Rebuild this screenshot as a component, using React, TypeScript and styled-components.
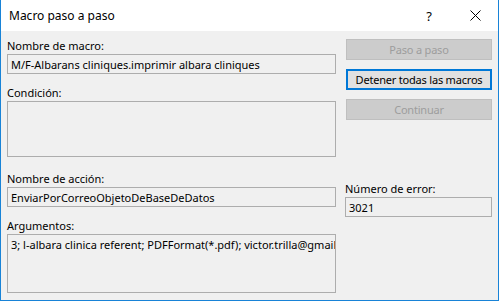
import React from 'react';
import styled, {createGlobalStyle} from 'styled-components';

const GlobalStyle = createGlobalStyle`
  html, body {
    margin: 0;
    padding: 0;
    background: #ffffff;
  }
  body {
    font-family: "Noto Sans", "Open Sans", Arial, sans-serif;
    font-size: 11px;
    color: #000000;
  }
`;

const Window = styled.div`
  width: 499px;
  height: 301px;
  box-sizing: border-box;
  border: 1px solid #1883d7;
  border-top: none;
  background: #f0f0f0;
  display: flex;
  flex-direction: column;
  overflow: hidden;
`;

const TitleBar = styled.div`
  height: 31px;
  background: #ffffff;
  display: flex;
  align-items: center;
  padding-left: 8px;
  box-sizing: border-box;
`;

const Title = styled.div`
  flex: 1;
  font-size: 12px;
  padding-bottom: 1px;
`;

const TitleButton = styled.div<{w: number}>`
  width: ${p => p.w}px;
  height: 31px;
  display: flex;
  align-items: center;
  justify-content: center;
  font-size: 13px;
`;

const Body = styled.div`
  flex: 1;
  display: grid;
  grid-template-columns: 329px 147px;
  column-gap: 9px;
  padding: 0 6px 0 6px;
`;

const Column = styled.div<{top: number}>`
  display: flex;
  flex-direction: column;
  padding-top: ${p => p.top}px;
`;

const Label = styled.div<{gap: number}>`
  margin-top: ${p => p.gap}px;
  height: 17px;
  line-height: 17px;
  font-size: 11px;
  white-space: nowrap;
`;

const Box = styled.div<{h: number}>`
  height: ${p => p.h}px;
  box-sizing: border-box;
  border: 1px solid #adadad;
  background: #f0f0f0;
  padding: 1px 3px 0 3px;
  line-height: 17px;
  white-space: nowrap;
  overflow: hidden;
`;

const Button = styled.div<{disabled?: boolean; focused?: boolean; gap: number}>`
  margin-top: ${p => p.gap}px;
  margin-left: 1px;
  height: 21px;
  box-sizing: border-box;
  display: flex;
  align-items: center;
  justify-content: center;
  background: ${p => (p.disabled ? '#cccccc' : '#e1e1e1')};
  border: ${p => (p.focused ? '2px solid #0078d7' : '1px solid #bfbfbf')};
  color: ${p => (p.disabled ? '#9d9d9d' : '#000000')};
  font-size: 11px;
  letter-spacing: -0.2px;
  white-space: nowrap;
`;

function CloseIcon() {
  return (
    <svg width="11" height="11" viewBox="0 0 11 11">
      <path d="M0.5 0.5 L10.5 10.5 M10.5 0.5 L0.5 10.5" stroke="#000" strokeWidth="1" fill="none"/>
    </svg>
  );
}

function App() {
  return (
    <>
      <GlobalStyle/>
      <Window>
        <TitleBar>
          <Title>Macro paso a paso</Title>
          <TitleButton w={46}>?</TitleButton>
          <TitleButton w={46}><CloseIcon/></TitleButton>
        </TitleBar>
        <Body>
          <Column top={6}>
            <Label gap={0}>Nombre de macro:</Label>
            <Box h={20}>M/F-Albarans cliniques.imprimir albara cliniques</Box>
            <Label gap={10}>Condición:</Label>
            <Box h={56}></Box>
            <Label gap={13}>Nombre de acción:</Label>
            <Box h={20}>EnviarPorCorreoObjetoDeBaseDeDatos</Box>
            <Label gap={10}>Argumentos:</Label>
            <Box h={59}>3; l-albara clinica referent; PDFFormat(*.pdf); victor.trilla@gmail</Box>
          </Column>
          <Column top={8}>
            <Button disabled gap={0}>Paso a paso</Button>
            <Button focused gap={9}>Detener todas las macros</Button>
            <Button disabled gap={9}>Continuar</Button>
            <Label gap={60}>Número de error:</Label>
            <Box h={20}>3021</Box>
          </Column>
        </Body>
      </Window>
    </>
  );
}

export default App;
